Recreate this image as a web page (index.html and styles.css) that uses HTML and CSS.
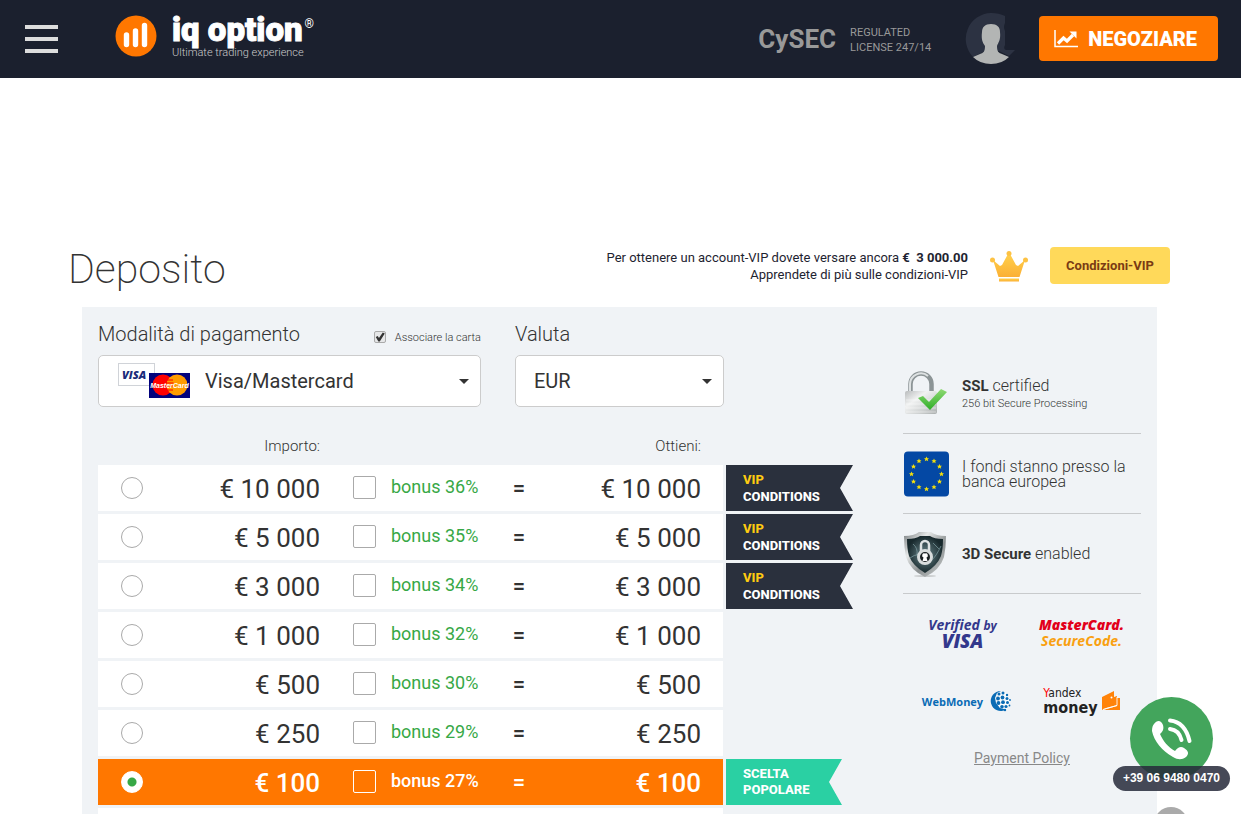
FILE: index.html
```html
<!DOCTYPE html>
<html lang="it">
<head>
<meta charset="utf-8">
<title>Deposito - IQ Option</title>
<link rel="stylesheet" href="styles.css">
</head>
<body>
<header class="topbar">
  <button class="menu" type="button" aria-label="Menu"><span></span><span></span><span></span></button>
  <a class="logo" href="#">
    <svg class="logo-mark" viewBox="0 0 42 42" aria-hidden="true">
      <circle cx="21" cy="21" r="20.500" fill="#ff7700"/>
      <g stroke="#fff" stroke-width="5.400" stroke-linecap="round"><path d="M11.500 20v9.500M20.500 16v13.500M29.500 10.500v19"/></g>
    </svg>
    <span class="logo-words">
      <span class="logo-name">iq option<span class="logo-reg">®</span></span>
      <span class="logo-tag">Ultimate trading experience</span>
    </span>
  </a>
  <div class="regulator">
    <strong class="cysec">CySEC</strong>
    <span class="license">REGULATED<br>LICENSE 247/14</span>
  </div>
  <svg class="avatar" viewBox="0 0 50 52" role="img" aria-label="Profilo">
    <path d="M26 0A26 26 0 0 0 8 44Q14 41 20 38H34Q40 41 44 43L50 37H41Q38 36 40 32V18Q38 14 40 10V3Q34 0 26 0Z" fill="#2c3242"/>
    <path d="M26 11C32 11 35 14 35 19C36 27 33 30 32 33C32 39 34 40 37 41L44 44Q37 51 26 51Q15 51 8 44L15 41C18 40 20 39 20 33C18 30 16 27 17 19C17 14 20 11 26 11Z" fill="#b3b5b4"/>
  </svg>
  <button class="trade" type="button">
    <svg class="trade-icon" viewBox="0 0 24 18" aria-hidden="true">
      <path d="M1 0v16.500h23" fill="none" stroke="#fff" stroke-width="1.500"/>
      <path d="M4 13.500l5.500-5.500 3.500 3 6-6" fill="none" stroke="#fff" stroke-width="3.200"/>
      <path d="M15.500 1.500H22.500v7z" fill="#fff"/>
    </svg>
    NEGOZIARE
  </button>
</header>

<main class="page">
  <div class="heading">
    <h1 class="title">Deposito</h1>
    <p class="vip-note">Per ottenere un account-VIP dovete versare ancora <b>€&nbsp; 3 000.00</b><br>Apprendete di più sulle condizioni-VIP</p>
    <svg class="crown" viewBox="0 0 38 31" aria-hidden="true">
      <defs><linearGradient id="gold" x1="0" y1="0" x2="0" y2="1"><stop offset="0" stop-color="#ffd04c"/><stop offset="1" stop-color="#fbb034"/></linearGradient></defs>
      <g fill="url(#gold)">
        <path d="M3 9L10 15 12 14 18 3H20L26 14 28 15 35 9 29.500 26H8.500Z"/>
        <path d="M9 27.500h20v3H9z"/>
      </g>
      <g fill="#fdc244"><circle cx="19" cy="2.500" r="2.500"/><circle cx="2.500" cy="9" r="2.500"/><circle cx="35.500" cy="9" r="2.500"/></g>
    </svg>
    <button class="vip-button" type="button">Condizioni-VIP</button>
  </div>

  <form class="panel">
    <div class="deposit">
      <div class="fields">
        <div class="field">
          <div class="field-head">
            <label class="field-label" for="method">Modalità di pagamento</label>
            <label class="link-card"><input class="link-box" type="checkbox" checked>Associare la carta</label>
          </div>
          <div class="select-wrap">
            <select class="select select-method" id="method"><option>Visa/Mastercard</option></select>
            <svg class="cards" viewBox="0 0 72 36" aria-hidden="true">
              <rect x=".5" y=".5" width="36" height="22" fill="#fff" stroke="#d0d3d8"/>
              <text x="4" y="16" class="card-visa">VISA</text>
              <rect x="31" y="10" width="41" height="25" fill="#02027c"/>
              <circle cx="45" cy="22" r="10.500" fill="#f00"/><circle cx="59" cy="22" r="10.500" fill="#ff9c00"/>
              <path d="M49 17h6M48.500 20h7M48.500 23h7M49 27h6" stroke="#f00" stroke-width="1"/>
              <text x="51.500" y="25" text-anchor="middle" class="card-mc">MasterCard</text>
            </svg>
            <svg class="caret" viewBox="0 0 10 5" aria-hidden="true"><path d="M0 0h10L5 5z"/></svg>
          </div>
        </div>
        <div class="field">
          <div class="field-head"><label class="field-label" for="currency">Valuta</label></div>
          <div class="select-wrap">
            <select class="select" id="currency"><option>EUR</option></select>
            <svg class="caret" viewBox="0 0 10 5" aria-hidden="true"><path d="M0 0h10L5 5z"/></svg>
          </div>
        </div>
      </div>

      <table class="amounts">
        <colgroup><col class="c-radio"><col class="c-amount"><col class="c-bonus"><col class="c-eq"><col class="c-get"><col class="c-flag"></colgroup>
        <thead><tr><th></th><th>Importo:</th><th></th><th></th><th class="get">Ottieni:</th><th></th></tr></thead>
        <tbody>
          <tr><td class="pick"><input class="radio" type="radio" name="amount" aria-label="€ 10 000"></td><td class="sum">€ 10 000</td><td class="bonus"><label class="bonus-label"><input class="check" type="checkbox"><span>bonus 36%</span></label></td><td class="eq">=</td><td class="sum get">€ 10 000</td><td class="flag-cell"><div class="flag"><span class="gold">VIP</span> CONDITIONS</div></td></tr>
          <tr><td class="pick"><input class="radio" type="radio" name="amount" aria-label="€ 5 000"></td><td class="sum">€ 5 000</td><td class="bonus"><label class="bonus-label"><input class="check" type="checkbox"><span>bonus 35%</span></label></td><td class="eq">=</td><td class="sum get">€ 5 000</td><td class="flag-cell"><div class="flag"><span class="gold">VIP</span> CONDITIONS</div></td></tr>
          <tr><td class="pick"><input class="radio" type="radio" name="amount" aria-label="€ 3 000"></td><td class="sum">€ 3 000</td><td class="bonus"><label class="bonus-label"><input class="check" type="checkbox"><span>bonus 34%</span></label></td><td class="eq">=</td><td class="sum get">€ 3 000</td><td class="flag-cell"><div class="flag"><span class="gold">VIP</span> CONDITIONS</div></td></tr>
          <tr><td class="pick"><input class="radio" type="radio" name="amount" aria-label="€ 1 000"></td><td class="sum">€ 1 000</td><td class="bonus"><label class="bonus-label"><input class="check" type="checkbox"><span>bonus 32%</span></label></td><td class="eq">=</td><td class="sum get">€ 1 000</td><td class="flag-cell"></td></tr>
          <tr><td class="pick"><input class="radio" type="radio" name="amount" aria-label="€ 500"></td><td class="sum">€ 500</td><td class="bonus"><label class="bonus-label"><input class="check" type="checkbox"><span>bonus 30%</span></label></td><td class="eq">=</td><td class="sum get">€ 500</td><td class="flag-cell"></td></tr>
          <tr><td class="pick"><input class="radio" type="radio" name="amount" aria-label="€ 250"></td><td class="sum">€ 250</td><td class="bonus"><label class="bonus-label"><input class="check" type="checkbox"><span>bonus 29%</span></label></td><td class="eq">=</td><td class="sum get">€ 250</td><td class="flag-cell"></td></tr>
          <tr class="active"><td class="pick"><input class="radio" type="radio" name="amount" aria-label="€ 100" checked></td><td class="sum">€ 100</td><td class="bonus"><label class="bonus-label"><input class="check" type="checkbox"><span>bonus 27%</span></label></td><td class="eq">=</td><td class="sum get">€ 100</td><td class="flag-cell"><div class="flag flag-popular"><span>SCELTA</span> POPOLARE</div></td></tr>
          <tr><td></td><td></td><td></td><td></td><td></td><td class="flag-cell"></td></tr>
        </tbody>
      </table>
    </div>

    <aside class="trust">
      <div class="trust-item trust-ssl">
        <svg class="trust-icon" viewBox="0 0 46 46" aria-hidden="true">
          <defs>
            <linearGradient id="lock" x1="0" y1="0" x2="1" y2="1"><stop offset="0" stop-color="#b9bcbd"/><stop offset=".35" stop-color="#f1f2f2"/><stop offset=".7" stop-color="#cfd2d2"/><stop offset="1" stop-color="#a9adad"/></linearGradient>
            <linearGradient id="tick" x1="0" y1="0" x2="0" y2="1"><stop offset="0" stop-color="#8ed973"/><stop offset="1" stop-color="#2fae28"/></linearGradient>
          </defs>
          <path d="M7.500 21V13a10.500 10.500 0 0 1 21 0v8" fill="none" stroke="#8c9496" stroke-width="4.500"/>
          <path d="M7 21V13a11 11 0 0 1 18-8" fill="none" stroke="#dde1e2" stroke-width="2"/>
          <rect x="2" y="20" width="32" height="23" rx="2" fill="url(#lock)"/>
          <path d="M3 29h30M3 33h30M3 37h30M3 41h30" stroke="#fff" stroke-opacity=".45"/>
          <path d="M15 27l5-2 6 6L38 18l6 3L27 39z" fill="url(#tick)"/>
        </svg>
        <div class="trust-text"><b>SSL</b> certified<small class="trust-small">256 bit Secure Processing</small></div>
      </div>
      <div class="trust-item">
        <svg class="trust-icon" viewBox="0 0 46 46" aria-hidden="true">
          <defs><path id="star" d="M0-2.500L.8-.8 2.500-.8 1.200.4 1.700 2.200 0 1.200-1.700 2.200-1.200.4-2.500-.8-.8-.8Z" fill="#f5e00c"/></defs>
          <rect x="1" y=".5" width="45" height="45" rx="4" fill="#0448a4"/>
          <g transform="translate(23.500 23)">
            <use href="#star" y="-15"/><use href="#star" x="7.500" y="-13"/><use href="#star" x="13" y="-7.500"/><use href="#star" x="15"/><use href="#star" x="13" y="7.500"/><use href="#star" x="7.500" y="13"/><use href="#star" y="15"/><use href="#star" x="-7.500" y="13"/><use href="#star" x="-13" y="7.500"/><use href="#star" x="-15"/><use href="#star" x="-13" y="-7.500"/><use href="#star" x="-7.500" y="-13"/>
          </g>
        </svg>
        <div class="trust-text">I fondi stanno presso la banca europea</div>
      </div>
      <div class="trust-item">
        <svg class="trust-icon" viewBox="0 0 46 46" aria-hidden="true">
          <defs>
            <linearGradient id="rim" x1="0" y1="0" x2="1" y2="1"><stop offset="0" stop-color="#777c7e"/><stop offset=".3" stop-color="#e6e8e8"/><stop offset=".6" stop-color="#8b9091"/><stop offset="1" stop-color="#d5d8d8"/></linearGradient>
            <radialGradient id="core"><stop offset="0" stop-color="#6b868b"/><stop offset="1" stop-color="#18292d"/></radialGradient>
          </defs>
          <ellipse cx="22" cy="45" rx="11" ry="1" fill="#c9cccd"/>
          <path d="M1 5Q11 5 16 1H28Q33 5 43 5Q43 16 41 26Q37 39 22 46Q7 39 3 26Q1 16 1 5Z" fill="url(#rim)"/>
          <path d="M4 8Q13 8 17 5H27Q31 8 40 8Q40 18 38 25Q34 35 22 42Q10 35 6 25Q4 18 4 8Z" fill="url(#core)"/>
          <path d="M7 27Q16 20 22 28T38 15M10 13Q15 17 14 24M30 12L36 18" fill="none" stroke="#8fb0b5" stroke-opacity=".6"/>
          <path d="M18 20V14a4 4 0 0 1 8 0v6" fill="none" stroke="#dfe3e3" stroke-width="2.500"/>
          <circle cx="22" cy="26" r="6.500" fill="#1b2022" stroke="#d9dddd" stroke-width="3"/>
          <path d="M22 22.500a2 2 0 0 1 1.500 4l1 3.500h-5l1-3.500A2 2 0 0 1 22 22.500z" fill="#fff"/>
        </svg>
        <div class="trust-text"><b>3D Secure</b> enabled</div>
      </div>

      <div class="brands">
        <div class="brand brand-visa"><span>Verified <small class="by">by</small></span><b class="visa-word">VISA</b></div>
        <div class="brand brand-mc"><span>MasterCard.</span><span class="secure-code">SecureCode.</span></div>
        <div class="brand brand-wm">WebMoney
          <svg class="globe" viewBox="0 0 22 22" aria-hidden="true">
            <path d="M12 1A10 10 0 1 0 17 19.500L11 18 7 13 6 8 8 3z" fill="#0a6bb5"/>
            <path d="M9 3h9l3 8-3 8-7-1-3-6z" fill="#fff" opacity=".8"/>
            <g fill="#0a6bb5"><circle cx="10" cy="4" r="1.500"/><circle cx="14" cy="3" r="1.500"/><circle cx="18" cy="5" r="1.200"/><circle cx="9" cy="8.500" r="1.900"/><circle cx="13.500" cy="7.500" r="1.900"/><circle cx="18" cy="8.500" r="1.500"/><circle cx="9.500" cy="13" r="1.900"/><circle cx="14" cy="12.200" r="1.900"/><circle cx="18.500" cy="12.500" r="1.500"/><circle cx="21" cy="10" r=".9"/><circle cx="13" cy="16.800" r="1.800"/><circle cx="17" cy="16.500" r="1.600"/><circle cx="20.500" cy="15.500" r=".9"/><circle cx="16" cy="20" r="1.200"/></g>
          </svg>
        </div>
        <div class="brand brand-ya">
          <span class="ya-words"><span><span class="ya-y">Y</span>andex</span><span class="ya-money">money</span></span>
          <svg class="wallet" viewBox="0 0 18 20" aria-hidden="true"><path d="M0 6L12 0V6L15 5V14L4 17L0 19Z" fill="#ff8309"/><path d="M15 7h3v12H1L15 15z" fill="#ff8309"/><path d="M1 18.500L15 14.500V6" fill="none" stroke="#fff" stroke-width=".9"/><circle cx="9.500" cy="6.500" r="1" fill="#fff"/></svg>
        </div>
      </div>
      <a class="policy" href="#">Payment Policy</a>
    </aside>
  </form>
</main>

<div class="callback">
  <button class="call-button" type="button" aria-label="Chiama">
    <svg class="call-icon" viewBox="0 0 42 44" aria-hidden="true">
      <path d="M3 7C6 3 10 3 12 8C13 12 12 14 9 17C12 24 17 30 24 34C27 30 30 29 33 31C38 34 38 37 35 40C31 43 27 43 22 40C11 34 3 24 1 14Q1 9 3 7Z" fill="#fff"/>
      <path d="M19 12Q28 13 30.500 23M19 3.500Q34 5 38.500 24" fill="none" stroke="#fff" stroke-width="4" stroke-linecap="round"/>
    </svg>
  </button>
  <a class="call-number" href="tel:+390694800470">+39 06 9480 0470</a>
  <span class="scroll-dot"></span>
</div>
</body>
</html>
```
FILE: styles.css
```css
* { box-sizing: border-box; }

body {
  position: relative;
  height: 100vh;
  margin: 0;
  overflow: hidden;
  background: #fff;
  color: #333;
  font-family: Roboto, "Liberation Sans", sans-serif;
}

button, select, input { margin: 0; font-family: inherit; }

/* Top bar */
.topbar {
  display: flex;
  align-items: center;
  height: 78px;
  padding: 0 23px 0 25px;
  background: #1b202e;
}
.menu {
  display: flex;
  flex-direction: column;
  gap: 8px;
  width: 33px;
  padding: 0;
  border: 0;
  background: none;
}
.menu span { height: 4px; background: #ddd; }
.logo {
  display: flex;
  gap: 15px;
  margin: 0 auto 4px 57px;
  color: #fff;
  text-decoration: none;
}
.logo-mark { width: 42px; height: 42px; }
.logo-words { display: flex; flex-direction: column; }
.logo-name {
  display: flex;
  gap: 2px;
  font-size: 33px;
  line-height: 30px;
  font-weight: 900;
  white-space: nowrap;
  -webkit-text-stroke: 1px #fff;
}
.logo-reg { font-size: 12px; line-height: 18px; font-weight: 400; -webkit-text-stroke: 0; }
.logo-tag { padding-top: 1px; font-size: 11px; line-height: 14px; color: #ccc; font-weight: 300; }
.regulator { display: flex; align-items: center; gap: 14px; color: #999; }
.cysec { font-size: 26px; line-height: 32px; }
.license { padding-top: 1px; font-size: 11px; line-height: 15px; }
.avatar { width: 50px; height: 52px; margin: 0 24px 0 34px; }
.trade {
  display: flex;
  align-items: center;
  gap: 10px;
  height: 45px;
  margin-bottom: 1px;
  padding: 0 21px 0 15px;
  border: 0;
  border-radius: 4px;
  background: #ff7700;
  color: #fff;
  font-size: 20px;
  font-weight: 900;
}
.trade-icon { width: 24px; height: 18px; }

/* Heading */
.page { padding: 167px 71px 0 68px; }
.heading { display: flex; align-items: center; }
.title { margin: 0 auto 0 0; font-size: 41px; line-height: 48px; font-weight: 200; }
.vip-note { margin: 0 22px 7px 0; font-size: 13px; line-height: 17px; text-align: right; color: #1e2330; }
.crown { width: 38px; height: 31px; margin: 0 22px 6px 0; }
.vip-button {
  width: 120px;
  height: 37px;
  margin-bottom: 8px;
  padding: 0;
  border: 0;
  border-radius: 4px;
  background: #ffd95a;
  color: #7a3b14;
  font-size: 13px;
  font-weight: 700;
}

/* Panel */
.panel {
  display: grid;
  grid-template-columns: minmax(0, 755px) 238px;
  gap: 50px;
  margin: 14px 13px 0 14px;
  padding: 16px;
  background: #f0f3f6;
}
.fields {
  display: grid;
  grid-template-columns: 383fr 209fr;
  gap: 34px;
  margin-right: 129px;
}
.field-head { display: flex; justify-content: space-between; align-items: center; height: 32px; padding-bottom: 10px; }
.field-label { font-size: 20px; font-weight: 300; }
.link-card { display: flex; align-items: center; gap: 9px; padding-top: 6px; font-size: 11px; font-weight: 300; }
.link-box {
  width: 12px;
  height: 12px;
  border: 1px solid #aaa;
  border-radius: 2px;
  appearance: none;
  background: #e6e7e8;
}
.link-box:checked::after {
  content: "";
  display: block;
  height: 10px;
  background: #333;
  clip-path: polygon(10% 50%, 30% 40%, 42% 60%, 80% 5%, 100% 15%, 50% 95%, 36% 95%);
}
.select-wrap { position: relative; }
.select {
  display: block;
  width: 100%;
  height: 52px;
  padding: 0 18px;
  border: 1px solid #ccc;
  border-radius: 5px;
  appearance: none;
  background: #fff;
  color: #333;
  font-size: 20px;
}
.select-method { padding-left: 106px; }
.cards { position: absolute; left: 20px; top: 8px; width: 72px; height: 36px; pointer-events: none; }
.card-visa { font: italic 800 11px "Open Sans", sans-serif; fill: #1a2b7a; }
.card-mc { font: italic 700 7px "Liberation Sans", sans-serif; fill: #fff; }
.caret { position: absolute; right: 12px; top: 24px; width: 10px; height: 5px; fill: #333; pointer-events: none; }

/* Amounts */
.amounts { width: 100%; margin-top: 23px; border-spacing: 0 3px; table-layout: fixed; }
.c-radio { width: 68px; }
.c-amount { width: 154px; }
.c-bonus { width: 178px; }
.c-eq { width: 42px; }
.c-get { width: 183px; }
.c-flag { width: 130px; }
.amounts th { height: 29px; padding: 3px 0 0; font-size: 15px; font-weight: 300; text-align: right; vertical-align: top; line-height: 20px; }
.amounts td { height: 46px; padding: 0; background: #fff; }
.amounts .pick { padding-left: 23px; }
.amounts .sum { padding-top: 2px; font-size: 26px; line-height: 30px; text-align: right; white-space: nowrap; }
.amounts .get { padding-right: 22px; }
.amounts .bonus { padding: 0 0 2px 33px; }
.bonus-label { display: flex; align-items: center; gap: 15px; color: #37a846; font-size: 18px; line-height: 24px; white-space: nowrap; }
.eq { font-size: 22px; font-weight: 500; text-align: center; }
.radio, .check { display: block; flex: none; appearance: none; border: 1px solid #aaa; background: #fff; }
.radio { width: 22px; height: 22px; border-radius: 50%; }
.check { width: 23px; height: 23px; border-radius: 2px; }
.radio:checked { border-color: #fff; background: radial-gradient(circle, #37a846 4px, #fff 5px); }
.active td { background: #ff7700; color: #fff; }
.active .sum { font-weight: 500; }
.active .bonus-label { color: #fff; font-weight: 500; }
.active .check { border-color: #fff; background: none; }
.amounts .flag-cell { padding-left: 3px; background: none; }
.flag {
  display: flex;
  flex-direction: column;
  justify-content: center;
  height: 46px;
  padding: 0 0 1px 17px;
  background: #2a303d;
  color: #fff;
  clip-path: polygon(0 0, 100% 0, calc(100% - 13px) 50%, 100% 100%, 0 100%);
  font-size: 13px;
  line-height: 17px;
  font-weight: 800;
}
.gold { color: #ffcb11; }
.flag-popular { width: 116px; background: #2ad0a3; line-height: 16px; }

/* Trust column */
.trust { display: flex; flex-direction: column; padding-top: 31px; }
.trust-item { display: flex; align-items: center; gap: 13px; height: 80px; border-bottom: 1px solid #c8cacc; }
.trust-ssl { padding-top: 1px; }
.trust-icon { flex: none; width: 46px; height: 46px; }
.trust-text { font-size: 16px; line-height: 15px; font-weight: 300; }
.trust-text b { font-size: 15px; font-weight: 700; }
.trust-small { display: block; margin-top: 3px; font-size: 11px; line-height: 14px; }
.brands { display: grid; grid-template-columns: 119px 1fr; gap: 24px 0; margin-top: 17px; }
.brand { display: flex; justify-content: center; align-items: center; height: 44px; font-family: "Open Sans", sans-serif; white-space: nowrap; }
.brand-visa { flex-direction: column; font-size: 14px; line-height: 15px; font-style: italic; font-weight: 700; color: #33388c; }
.by { font-size: 12px; }
.visa-word { font-size: 19px; line-height: 17px; font-weight: 800; }
.brand-mc { flex-direction: column; font-size: 14px; line-height: 16px; font-style: italic; font-weight: 800; color: #e2001a; }
.secure-code { font-weight: 700; color: #f9a010; }
.brand-wm { gap: 6px; padding-left: 8px; font-size: 11px; font-weight: 700; color: #0a6bb5; }
.globe { width: 22px; height: 22px; }
.brand-ya { gap: 4px; color: #222; font-family: "DejaVu Sans Condensed", "Open Sans", sans-serif; font-size: 12px; }
.ya-words { display: flex; flex-direction: column; line-height: 14px; }
.ya-y { color: #f00; }
.ya-money { font-size: 16px; line-height: 16px; font-weight: 700; }
.wallet { width: 18px; height: 20px; }
.policy { align-self: center; margin-top: 26px; font-size: 14px; line-height: 18px; color: #888; }

/* Callback widget */
.callback { position: absolute; right: 11px; top: 697px; display: flex; flex-direction: column; align-items: center; }
.call-button {
  width: 83px;
  height: 83px;
  padding: 0 0 0 1px;
  border: 0;
  border-radius: 50%;
  background: #43a55c;
}
.call-icon { display: block; width: 42px; height: 44px; margin: auto; }
.call-number {
  position: relative;
  margin-top: -14px;
  padding: 0 10px;
  border-radius: 13px;
  background: rgba(38, 41, 58, .85);
  color: #fff;
  font: 700 12px/25px "Liberation Sans", sans-serif;
  text-decoration: none;
  white-space: nowrap;
}
.scroll-dot { width: 34px; height: 34px; margin-top: 16px; border-radius: 50%; background: #aaa; }
```
